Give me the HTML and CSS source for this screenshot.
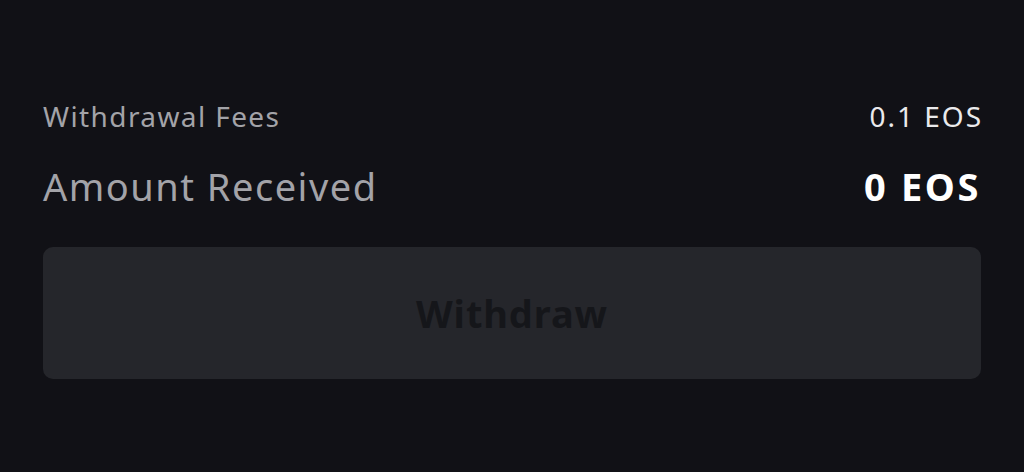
FILE: index.html
```html
<!DOCTYPE html>
<html>
<head>
<meta charset="utf-8">
<link rel="stylesheet" href="styles.css">
</head>
<body>
<div class="panel">
  <div class="row fees">
    <span class="label">Withdrawal Fees</span>
    <span class="value">0.1 EOS</span>
  </div>
  <div class="row received">
    <span class="label">Amount Received</span>
    <span class="value">0 EOS</span>
  </div>
  <button class="btn" disabled>Withdraw</button>
</div>
</body>
</html>
```

FILE: styles.css
```css
html, body {
  margin: 0;
  padding: 0;
  background: #111116;
  width: 1024px;
  height: 472px;
  overflow: hidden;
}
.panel {
  padding: 96px 43px 0 43px;
  font-family: "Noto Sans", "Open Sans", sans-serif;
  display: flex;
  flex-direction: column;
}
.row {
  display: flex;
  justify-content: space-between;
  align-items: center;
}
.fees {
  height: 40px;
  font-size: 28px;
}
.fees .label { color: #a3a3a8; letter-spacing: 1.4px; }
.fees .value { color: #eaeaec; letter-spacing: 2px; margin-right: -2px; }
.received {
  margin-top: 30px;
  height: 40px;
  font-size: 38px;
}
.received .label { color: #a3a3a8; letter-spacing: 1.5px; }
.received .value { color: #ffffff; font-weight: 700; letter-spacing: 2.6px; }
.btn {
  margin-top: 41px;
  height: 132px;
  border: none;
  border-radius: 10px;
  background: #25262b;
  color: #15161a;
  font-family: inherit;
  font-size: 38px;
  font-weight: 700;
  letter-spacing: 0.9px;
  padding: 0;
}
```
